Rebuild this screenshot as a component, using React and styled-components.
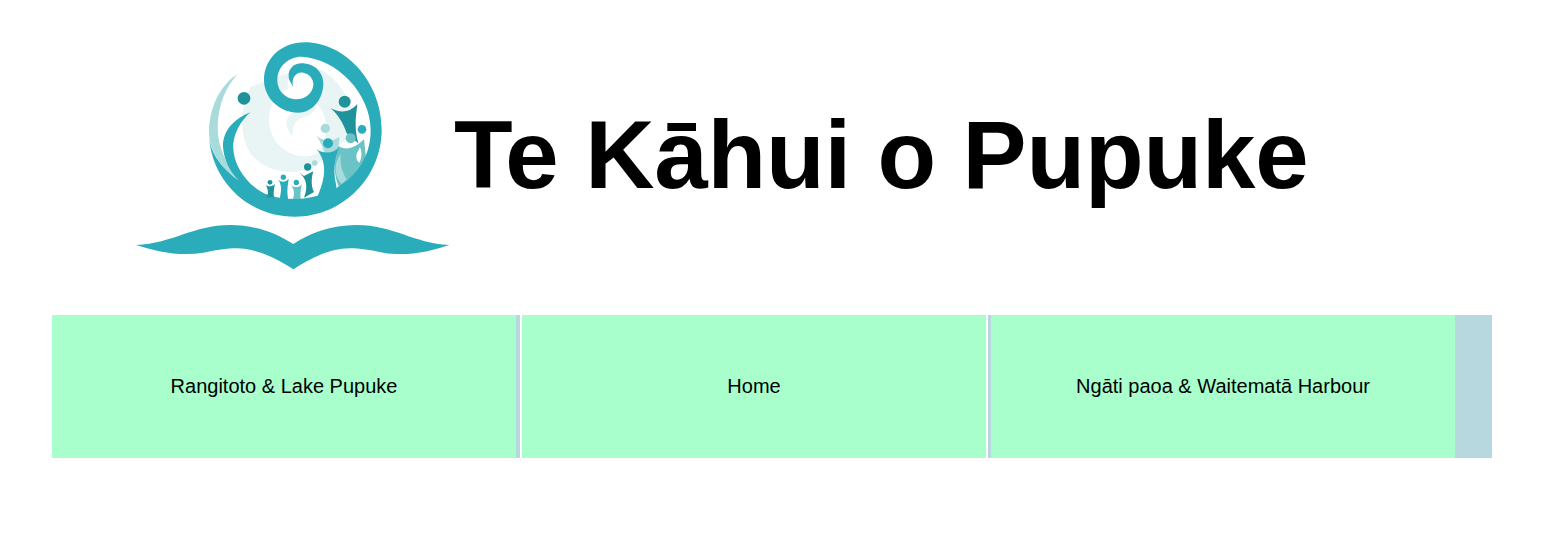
import React from "react";
import styled, { createGlobalStyle } from "styled-components";

const Global = createGlobalStyle`
  html, body { margin: 0; padding: 0; background: #fff; }
  body { font-family: "Liberation Sans", Arial, sans-serif; color: #000; }
`;
const Page = styled.div`
  width: 1554px;
  height: 533px;
  overflow: hidden;
`;
const Header = styled.header`
  display: flex;
  align-items: center;
  height: 250px;
  padding: 30px 0 0 130px;
`;
const LogoSvg = styled.svg`
  display: block;
  flex: none;
  width: 322px;
  height: 250px;
`;
const Title = styled.h1`
  margin: 0 0 0 2px;
  font-size: 96px;
  line-height: 1;
  font-weight: 700;
  letter-spacing: -0.15px;
  white-space: nowrap;
`;
const Nav = styled.nav`
  display: flex;
  width: 1440px;
  height: 143px;
  margin: 35px 0 0 52px;
  background: #b8d8e0;
`;
const NavItem = styled.a`
  flex: none;
  width: 464px;
  display: flex;
  align-items: center;
  justify-content: center;
  background: #a9ffcb;
  font-size: 20px;
  color: #000;
`;
const Divider = styled.span`
  flex: none;
  width: 2px;
  background: #fff;
  margin-left: ${(p) => p.$before}px;
  margin-right: ${(p) => p.$after}px;
`;

const MAIN = "#2aacbb", DARK = "#1f929c", LIGHT = "#a9dadc", MID = "#6cc3c6", PALE = "#e9f5f4";

function Person({ x, y, s = 1, color, dot, base = 506 }) {
  const h = (base - y) / s;
  return (
    <g transform={`translate(${x} ${y}) scale(${s})`}>
      <circle cx="0" cy="-18" r="10" fill={dot || color} />
      <path d={`M-20 -10 C-12 2 10 2 20 -12 C18 8 12 30 18 ${h} L-14 ${h} C-6 30 -6 10 -20 -10Z`} fill={color} />
    </g>
  );
}

function Logo() {
  return (
    <LogoSvg viewBox="0 0 966 750" role="img" aria-label="Te Kāhui o Pupuke logo">
      {/* pale inner swirl */}
      <path d="M362 170 C330 230 325 320 365 375 C410 430 500 440 560 405 L680 300 C670 210 620 130 540 105Z" fill={PALE} />
      <path d="M470 178 C425 200 405 260 425 310 C445 365 510 395 565 370 C590 340 595 290 580 250 C565 215 520 180 470 178Z" fill="#fff" />
      <path d="M560 232 C510 225 465 250 470 285 C473 300 480 312 490 320 C483 295 495 270 520 262 C540 256 555 245 560 232Z" fill={PALE} />
      <ellipse cx="515" cy="165" rx="42" ry="46" fill="#fff" />
      {/* light crescent */}
      <path d="M322 133 C265 170 237 240 237 310 C240 370 280 420 327 452 C290 405 262 350 263 290 C265 225 285 175 322 133Z" fill={LIGHT} />
      {/* figures that sit behind the ring */}
      <path d="M625 348 C650 365 680 350 702 328 L712 420 L635 490 C608 435 610 400 625 348Z" fill={MID} />
      <path d="M632 372 C612 400 610 435 635 462 L650 448 C635 425 630 400 632 372Z" fill={LIGHT} />
      {/* main ring, koru and swoosh */}
      <path d="M237 318 C245 455 355 560 495 560 C640 560 755 440 755 300 C755 150 640 37 525 37 C450 37 402 90 402 150 C402 205 450 248 505 248 C550 248 580 205 580 160 C580 125 550 100 515 100 C485 100 470 125 478 150 L490 172 C482 145 498 124 520 128 C540 132 552 150 550 165 C548 190 525 208 500 208 C470 208 442 185 442 150 C442 110 475 80 515 80 C620 85 722 190 722 300 C722 385 675 440 625 470 C585 495 540 505 500 507 C470 508 440 503 415 495 C350 470 305 400 310 340 C314 305 335 270 361 247 C315 265 278 300 279 350 C282 390 300 425 327 452 C280 420 240 370 237 318Z" fill={MAIN} />
      <circle cx="342" cy="205" r="19" fill={DARK} />
      {/* right figures */}
      <path d="M560 318 C580 335 610 335 628 320 C628 345 620 375 610 420 L590 395 C585 365 575 340 560 318Z" fill={LIGHT} />
      <circle cx="586" cy="295" r="14" fill={LIGHT} />
      <path d="M602 235 C630 250 660 248 682 222 C680 250 670 285 685 340 L650 310 C640 280 625 255 602 235Z" fill={DARK} />
      <circle cx="644" cy="215" r="18" fill={DARK} />
      <circle cx="662" cy="325" r="15" fill={MID} />
      <circle cx="696" cy="298" r="16" fill="#fff" />
      <circle cx="696" cy="298" r="13" fill={MAIN} />
      <path d="M680 372 C678 385 680 392 688 398 C696 385 696 365 690 352Z" fill="#fff" />
      <path d="M560 358 C580 372 610 372 628 350 C612 390 610 425 618 462 C625 490 600 500 560 505 C590 440 590 395 560 358Z" fill={MAIN} />
      <circle cx="594" cy="340" r="15" fill={MAIN} />
      {/* lower figures */}
      <circle cx="554" cy="399" r="8" fill={LIGHT} />
      <circle cx="533" cy="411" r="11" fill={DARK} />
      <path d="M506 426 L522 438 L550 424 C542 450 545 475 552 486 L522 503 C535 470 530 445 506 426Z" fill={DARK} />
      <Person x={420} y={470} s={0.72} color={DARK} base={502} />
      <Person x={460} y={456} s={0.8} color={MAIN} base={507} />
      <Person x={499} y={472} s={0.8} color={MID} dot={MAIN} base={507} />
      {/* open book */}
      <path d="M18 645 C130 640 190 585 300 585 C380 585 440 610 490 642 C540 610 600 585 680 585 C790 585 850 640 958 645 C900 665 830 680 760 668 C720 660 690 655 660 655 C600 655 540 685 490 718 C440 685 380 655 320 655 C290 655 260 660 220 668 C150 680 80 665 18 645Z" fill={MAIN} />
    </LogoSvg>
  );
}

export default function App() {
  return (
    <Page>
      <Global />
      <Header>
        <Logo />
        <Title>Te Kāhui o Pupuke</Title>
      </Header>
      <Nav>
        <NavItem>Rangitoto &amp; Lake Pupuke</NavItem>
        <Divider $before={4} $after={0} />
        <NavItem>Home</NavItem>
        <Divider $before={0} $after={3} />
        <NavItem>Ngāti paoa &amp; Waitematā Harbour</NavItem>
      </Nav>
    </Page>
  );
}
